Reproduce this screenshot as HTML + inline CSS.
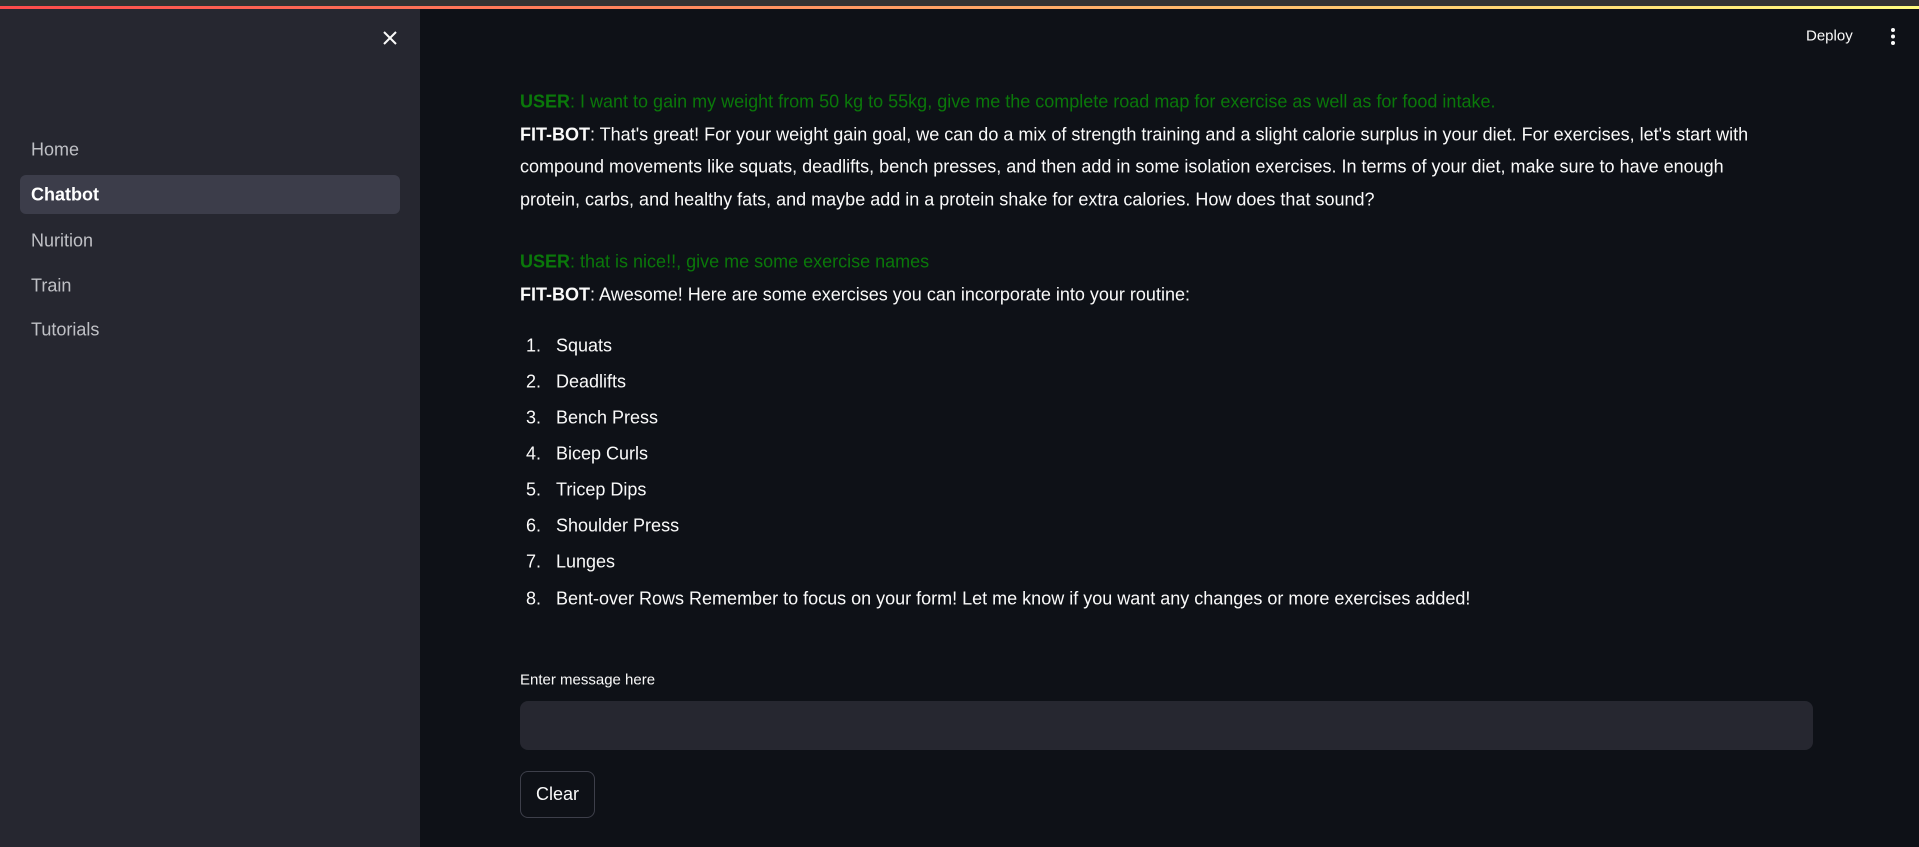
<!DOCTYPE html>
<html><head><meta charset="utf-8"><style>
*{margin:0;padding:0;box-sizing:border-box}
body{width:1919px;height:847px;background:#0e1117;font-family:"Liberation Sans",sans-serif;color:#fafafa;position:relative;overflow:hidden}
.top{position:absolute;left:0;top:0;width:1919px;height:6px;background:#333}
.grad{position:absolute;left:0;top:6px;width:1919px;height:3px;background:linear-gradient(90deg,#ff4b4b,#fffd80)}
.side{position:absolute;left:0;top:9px;width:420px;height:838px;background:#262730}
.nav{position:absolute;left:31px;font-size:18px;color:#bfc0c5;transform:translateY(-50%)}
.hl{position:absolute;left:20px;top:166px;width:380px;height:39px;background:#3c3d4a;border-radius:6px}
.t{position:absolute;left:520px;font-size:18px;white-space:nowrap;transform:translateY(-50%)}
.u{color:#0a780a}
b{font-weight:bold}
.n{position:absolute;left:526px;font-size:18px;transform:translateY(-50%)}
.li{position:absolute;left:556px;font-size:18px;white-space:nowrap;transform:translateY(-50%)}
</style></head><body>
<div class="top"></div><div class="grad"></div>
<div class="side">
<svg style="position:absolute;left:383px;top:22px" width="14" height="14" viewBox="0 0 14 14"><path d="M1 1L13 13M13 1L1 13" stroke="#fafafa" stroke-width="2"/></svg>
<div class="hl"></div>
<div class="nav" style="top:141px">Home</div>
<div class="nav" style="top:186px;color:#fff;font-weight:bold">Chatbot</div>
<div class="nav" style="top:232px">Nurition</div>
<div class="nav" style="top:277px">Train</div>
<div class="nav" style="top:321px">Tutorials</div>
</div>
<div style="position:absolute;left:1806px;top:36px;transform:translateY(-50%);font-size:15px">Deploy</div>
<svg style="position:absolute;left:1889px;top:27px" width="8" height="20"><circle cx="4" cy="3" r="2" fill="#fafafa"/><circle cx="4" cy="9.5" r="2" fill="#fafafa"/><circle cx="4" cy="16" r="2" fill="#fafafa"/></svg>

<div class="t u" style="top:102px"><b>USER</b>: I want to gain my weight from 50 kg to 55kg, give me the complete road map for exercise as well as for food intake.</div>
<div class="t" style="top:135px"><b>FIT-BOT</b>: That's great! For your weight gain goal, we can do a mix of strength training and a slight calorie surplus in your diet. For exercises, let's start with</div>
<div class="t" style="top:167px">compound movements like squats, deadlifts, bench presses, and then add in some isolation exercises. In terms of your diet, make sure to have enough</div>
<div class="t" style="top:200px">protein, carbs, and healthy fats, and maybe add in a protein shake for extra calories. How does that sound?</div>
<div class="t u" style="top:262px"><b>USER</b>: that is nice!!, give me some exercise names</div>
<div class="t" style="top:295px"><b>FIT-BOT</b>: Awesome! Here are some exercises you can incorporate into your routine:</div>

<div class="n" style="top:346px">1.</div><div class="li" style="top:346px">Squats</div>
<div class="n" style="top:382px">2.</div><div class="li" style="top:382px">Deadlifts</div>
<div class="n" style="top:418px">3.</div><div class="li" style="top:418px">Bench Press</div>
<div class="n" style="top:454px">4.</div><div class="li" style="top:454px">Bicep Curls</div>
<div class="n" style="top:490px">5.</div><div class="li" style="top:490px">Tricep Dips</div>
<div class="n" style="top:526px">6.</div><div class="li" style="top:526px">Shoulder Press</div>
<div class="n" style="top:562px">7.</div><div class="li" style="top:562px">Lunges</div>
<div class="n" style="top:599px">8.</div><div class="li" style="top:599px">Bent-over Rows Remember to focus on your form! Let me know if you want any changes or more exercises added!</div>

<div class="t" style="top:680px;font-size:15px">Enter message here</div>
<div style="position:absolute;left:520px;top:701px;width:1293px;height:49px;background:#262730;border-radius:8px"></div>
<div style="position:absolute;left:520px;top:771px;width:75px;height:47px;border:1px solid #3d3f4a;border-radius:8px;font-size:18px;display:flex;align-items:center;justify-content:center">Clear</div>
</body></html>
